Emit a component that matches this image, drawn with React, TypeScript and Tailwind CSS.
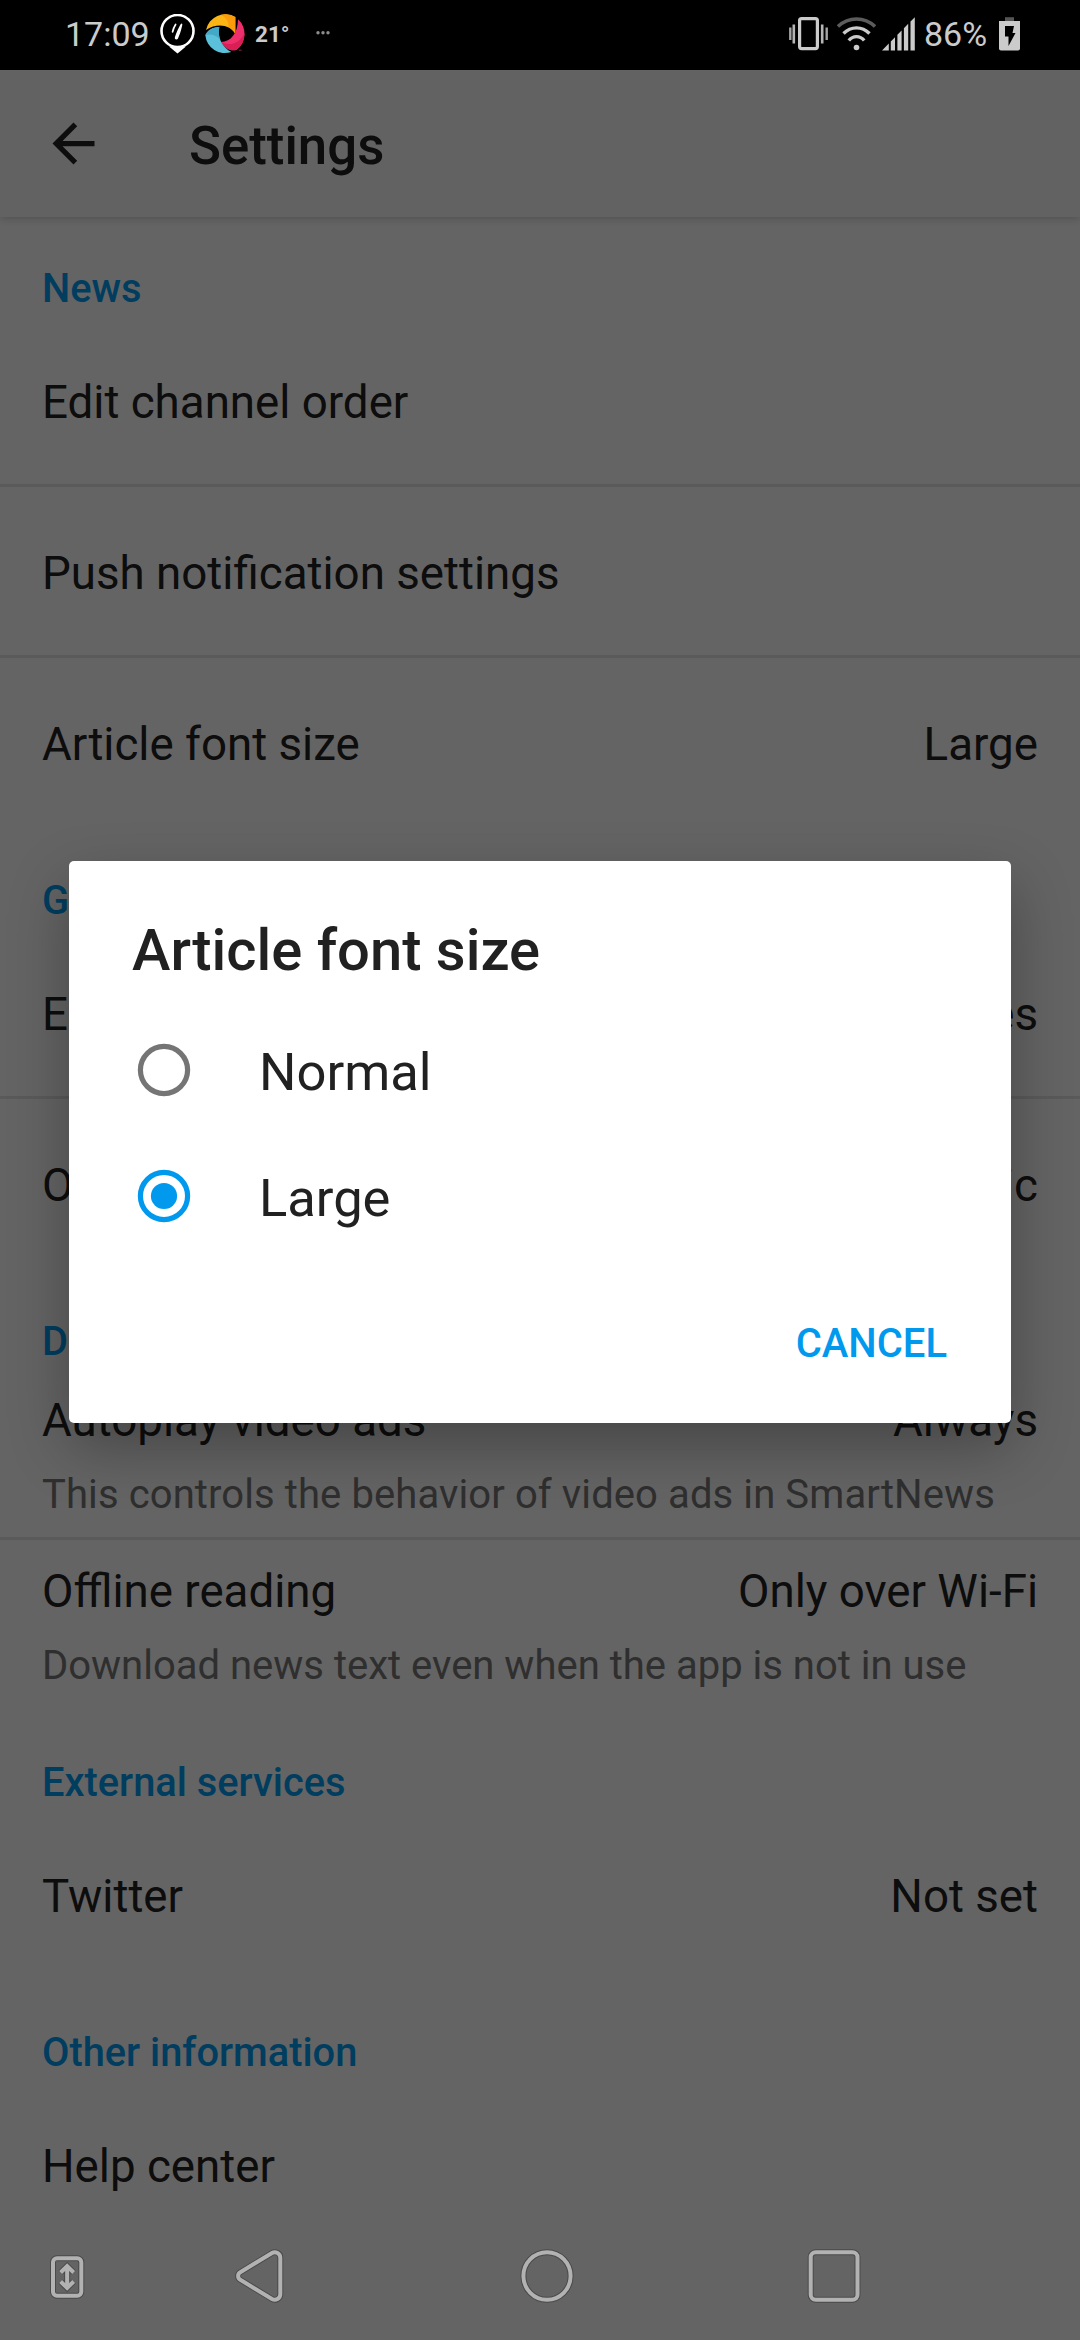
import { ReactNode } from "react";

function StatusBar() {
  return (
    <div className="flex h-[70px] shrink-0 items-center bg-black pl-[65px] text-[#cbcbcb]">
      <span className="w-[94px] pb-[2px] text-[34px] leading-10">17:09</span>
      <svg className="ml-px h-10 w-[35px] shrink-0 -translate-y-px" viewBox="0 0 35 40" fill="none">
        <circle cx="17.5" cy="17" r="16" stroke="#fff" strokeWidth="2.6" />
        <path d="M9 32.5h17L17.5 39.5z" fill="#fff" />
        <path d="M21.8 9.5c.9.3.5 1.800 0 3.500-1 4.500-2.300 8-3.800 11.500-.8 1.700-3.800 1.200-3.100-1.200 1.300-4.300 3.400-8.700 5.400-12.500.5-.9 1-1.500 1.500-1.300z" fill="#fff" />
        <path d="M15.600 10.500c-1.300 2-2.300 4.300-3 7.300" stroke="#fff" strokeWidth="1.700" strokeLinecap="round" />
      </svg>
      <svg className="ml-[10px] h-10 w-10 shrink-0 -translate-y-px" viewBox="494 40 120 120">
        <path d="M497 88A59 59 0 0 1 585 49V99C568 72 530 66 497 88Z" fill="#fdb515" />
        <path d="M540 43A59 59 0 0 1 585 49V99C578 88 572 83 564 79C566 62 558 50 540 43Z" fill="#fc9c0c" />
        <path d="M593 56A59 59 0 0 1 588 148C568 152 553 142 542 124C572 124 592 98 593 56Z" fill="#ee2f6b" />
        <path d="M612 100A59 59 0 0 1 588 148C568 152 553 142 542 124C570 138 596 128 612 100Z" fill="#d91f55" />
        <path d="M495 104C503 86 520 79 537 80C531 106 542 138 573 154A59 59 0 0 1 495 104Z" fill="#5bc0d9" />
        <path d="M495 104C503 86 520 79 537 80C534 94 535 106 540 118C524 100 508 100 495 104Z" fill="#43a9c6" />
        <path d="M595 147h9v3h-9z" fill="#8a2140" />
      </svg>
      <span className="ml-[10px] w-[36px] pb-px text-[22.5px] leading-[27px] font-bold">21°</span>
      <svg className="ml-[25px] h-1 w-[14px] shrink-0 -translate-y-[2px]" viewBox="0 0 14 4" fill="#8c8c8c">
        <circle cx="2" cy="1.700" r="1.700" />
        <circle cx="7" cy="1.700" r="1.700" />
        <circle cx="12" cy="1.700" r="1.700" />
      </svg>
      <div className="ml-auto flex h-full items-center pr-[60px] pb-[2px]">
        <svg className="h-[34px] w-[39px]" viewBox="0 0 39 34" fill="none">
          <rect x="10.600" y="1.600" width="17.800" height="30" rx="2" stroke="#cbcbcb" strokeWidth="3.200" />
          <path d="M4.800 7.500v19M33.200 7.500v19" stroke="#b5b5b5" strokeWidth="2.600" />
          <path d="M1.300 10.500v12.500M37.700 10.500v12.500" stroke="#a5a5a5" strokeWidth="2.400" />
        </svg>
        <svg className="ml-[9.500px] h-[34px] w-[39px]" viewBox="0 0 39 34" fill="none" strokeWidth="3.400">
          <path d="M1 9.500C11.500-.5 27.500-.5 38 9.500" stroke="#5c5c5c" />
          <path d="M6.500 16.500C14 9 25 9 32.500 16.500" stroke="#cbcbcb" />
          <path d="M11.800 23.500C16 18.300 23 18.300 27.200 23.500" stroke="#cbcbcb" />
          <circle cx="19.500" cy="30.500" r="2.800" fill="#cbcbcb" />
        </svg>
        <svg className="ml-[6px] h-[34px] w-[33px]" viewBox="0 0 33 34" fill="#cbcbcb">
          <path d="M0 33.500L6.800 26.600V33.500zM8.800 33.500V24.500L13 20.200V33.500zM15.400 33.500V17.700L19.600 13.500V33.500zM21.900 33.500V11.200L26.200 6.800V33.500zM28.500 33.500V4.500L32.800.2V33.500z" />
        </svg>
        <span className="ml-[9px] w-[64px] text-[34px] leading-10">86%</span>
        <svg className="ml-[11px] h-[34px] w-[21px]" viewBox="0 0 21 34">
          <path d="M6 .2h9V4H6z" fill="#555" />
          <path d="M0 4h21v27.500a2 2 0 0 1-2 2H2a2 2 0 0 1-2-2z" fill="#cbcbcb" />
          <path d="M6 9h9l-1.500 7h3L9.500 29V19.500H6z" fill="#000" />
        </svg>
      </div>
    </div>
  );
}

function Toolbar() {
  return (
    <div className="z-10 flex h-[147px] shrink-0 items-center bg-[#f6f6f6] pl-[42px] shadow-[0_2px_8px_rgba(0,0,0,0.18)]">
      <svg className="h-[63px] w-[63px]" viewBox="0 0 24 24" fill="#212121">
        <path d="M20 11H7.830l5.590-5.590L12 4l-8 8 8 8 1.410-1.410L7.830 13H20v-2z" />
      </svg>
      <h1 className="ml-[84px] pt-[5px] text-[52.8px] leading-[62px] font-medium">Settings</h1>
    </div>
  );
}

function SectionHeader({ children }: { children: ReactNode }) {
  return (
    <h2 className="h-[99px] shrink-0 px-[42px] pt-12 text-[39.8px] leading-[47px] font-medium text-[#0099ee]">
      {children}
    </h2>
  );
}

type RowProps = { label: string; value?: string; note?: string; noteClass?: string; divider?: boolean };

function Row({ label, value, note, noteClass = "", divider }: RowProps) {
  return (
    <div
      className={`h-[171px] shrink-0 px-[42px] text-[45.7px] leading-[54px] ${note ? "pt-[25px]" : "pt-[60px]"} ${
        divider ? "border-b-[3px] border-[#e0e0e0]" : ""
      }`}
    >
      <div className="flex justify-between">
        <span>{label}</span>
        <span>{value}</span>
      </div>
      {note && (
        <p className={`mt-[23px] text-[40px] leading-[47px] whitespace-nowrap text-[#757575] ${noteClass}`}>{note}</p>
      )}
    </div>
  );
}

function Option({ label, checked }: { label: string; checked?: boolean }) {
  return (
    <label className="flex h-[126px] items-center pl-[68px]">
      <svg className="h-[54px] w-[54px]" viewBox="0 0 54 54" fill="none">
        <circle cx="27" cy="27" r="23.600" stroke={checked ? "#0099ee" : "#757575"} strokeWidth="5.200" />
        {checked && <circle cx="27" cy="27" r="13.100" fill="#0099ee" />}
      </svg>
      <span className="ml-[68px] pt-[5px] text-[52.5px] leading-[61px]">{label}</span>
    </label>
  );
}

function Dialog() {
  return (
    <div className="absolute top-[861px] left-[69px] h-[562px] w-[942px] rounded-[5px] bg-white pt-[55px] shadow-[0_24px_60px_rgba(0,0,0,0.3)]">
      <h2 className="mb-[23px] pl-[63px] text-[57.9px] leading-[68px] font-medium">Article font size</h2>
      <Option label="Normal" />
      <Option label="Large" checked />
      <div className="flex justify-end pt-[61px] pr-16">
        <button className="text-[40px] leading-[47px] font-medium text-[#0099ee]">CANCEL</button>
      </div>
    </div>
  );
}

function Outlined({ d, narrow }: { d: string; narrow?: boolean }) {
  return (
    <svg
      className={`h-14 shrink-0 ${narrow ? "w-9" : "w-14"}`}
      viewBox={narrow ? "0 0 36 56" : "0 0 56 56"}
      fill="none"
    >
      <path d={d} stroke="#4a4a4a" strokeWidth="6" />
      <path d={d} stroke="#b2b2b2" strokeWidth="4" />
    </svg>
  );
}

function NavBar() {
  return (
    <div className="absolute bottom-0 left-0 flex h-[126px] w-full items-center pb-[2px] pl-[49px]">
      <Outlined
        narrow
        d="M8 10.200h20.300a4 4 0 0 1 4 4v29.600a4 4 0 0 1-4 4H8a4 4 0 0 1-4-4V14.200a4 4 0 0 1 4-4zM18.150 18v22M11.650 24.500l6.500-6.500 6.500 6.500M11.650 33.500l6.500 6.500 6.500-6.500"
      />
      <div className="ml-[147px] flex">
        <Outlined d="M8.300 24.200L40 5a5.500 5.500 0 0 1 8.300 4.700V46.300a5.500 5.500 0 0 1-8.300 4.700L8.300 31.800a4.400 4.400 0 0 1 0-7.600z" />
      </div>
      <div className="ml-[230.500px] flex">
        <Outlined d="M28 4.200a23.600 23.800 0 1 0 0 47.600a23.600 23.800 0 1 0 0-47.600z" />
      </div>
      <div className="ml-[231px] flex">
        <Outlined d="M9.700 4.200h36.800a5 5 0 0 1 5 5v37.600a5 5 0 0 1-5 5H9.700a5 5 0 0 1-5-5V9.200a5 5 0 0 1 5-5z" />
      </div>
    </div>
  );
}

export default function App() {
  return (
    <div className="relative flex h-[2340px] w-[1080px] flex-col overflow-hidden bg-[#fafafa] font-[Roboto,sans-serif] text-[#212121]">
      <StatusBar />
      <Toolbar />
      <SectionHeader>News</SectionHeader>
      <Row label="Edit channel order" divider />
      <Row label="Push notification settings" divider />
      <Row label="Article font size" value="Large" />
      <SectionHeader>General</SectionHeader>
      <Row label="Edition" value="United States" divider />
      <Row label="Orientation" value="Automatic" />
      <SectionHeader>Data usage</SectionHeader>
      <Row
        label="Autoplay video ads"
        value="Always"
        note="This controls the behavior of video ads in SmartNews"
        noteClass="tracking-[0.1px]"
        divider
      />
      <Row label="Offline reading" value="Only over Wi-Fi" note="Download news text even when the app is not in use" />
      <SectionHeader>External services</SectionHeader>
      <Row label="Twitter" value="Not set" />
      <SectionHeader>Other information</SectionHeader>
      <Row label="Help center" />
      <div className="absolute inset-x-0 top-[70px] bottom-0 z-20 bg-black/60" />
      <div className="absolute inset-0 z-30">
        <Dialog />
        <NavBar />
      </div>
    </div>
  );
}
